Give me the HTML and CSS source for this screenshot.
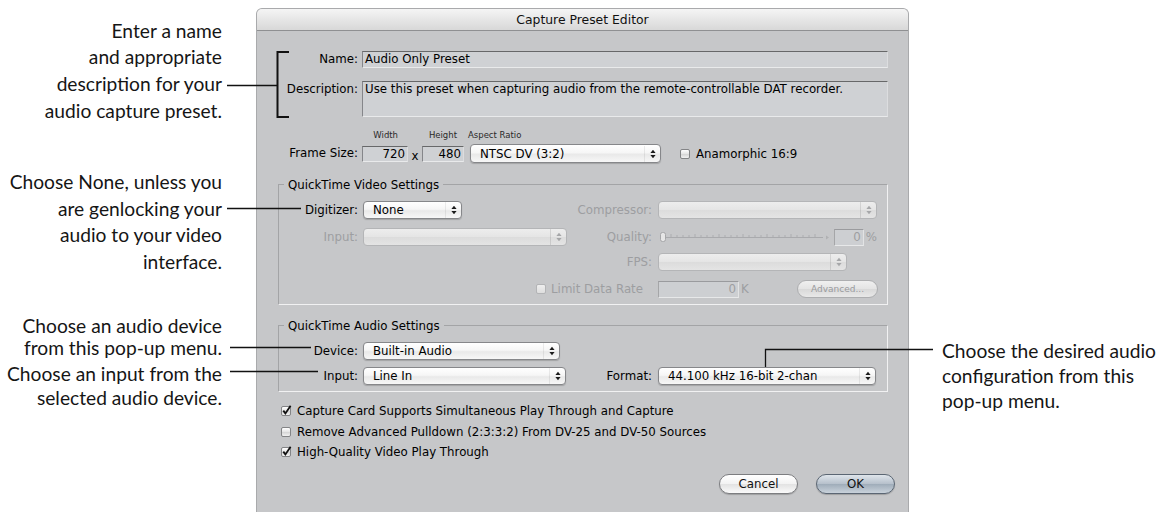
FILE: index.html
```html
<!DOCTYPE html>
<html>
<head>
<meta charset="utf-8">
<title>Capture Preset Editor</title>
<link rel="stylesheet" href="styles.css">
</head>
<body>
<div class="page">
  <div class="notes-left">
    <p class="note n1">Enter a name<br>and appropriate<br>description for your<br>audio capture preset.</p>
    <p class="note n2">Choose None, unless you<br>are genlocking your<br>audio to your video<br>interface.</p>
    <p class="note n3">Choose an audio device<br>from this pop-up menu.</p>
    <p class="note n4">Choose an input from the<br>selected audio device.</p>
  </div>

  <div class="dialog">
    <div class="titlebar">Capture Preset Editor</div>
    <div class="content">
      <div class="row row-name">
        <span class="lbl">Name:</span>
        <div class="tf tf-wide">Audio Only Preset</div>
      </div>
      <div class="row row-desc">
        <span class="lbl">Description:</span>
        <div class="tf tf-wide tf-area">Use this preset when capturing audio from the remote-controllable DAT recorder.</div>
      </div>
      <div class="caps">
        <span class="cap cap-w">Width</span><span class="cap cap-h">Height</span><span class="cap cap-a">Aspect Ratio</span>
      </div>
      <div class="row row-frame">
        <span class="lbl">Frame Size:</span>
        <div class="tf tf-num tf-w">720</div>
        <span class="times">x</span>
        <div class="tf tf-num tf-h">480</div>
        <div class="popup pop-aspect"><span class="popup-text">NTSC DV (3:2)</span><span class="popup-arrows"><svg class="arr" width="6" height="10" viewBox="0 0 6 10"><path d="M3 0.8 L5.6 4 H0.4Z M3 9.2 L5.6 6 H0.4Z"/></svg></span></div>
        <span class="cb cb-ana"></span>
        <span class="check-label">Anamorphic 16:9</span>
      </div>

      <div class="group group-video">
        <div class="group-title">QuickTime Video Settings</div>
        <div class="grid grid-video">
          <span class="glbl">Digitizer:</span>
          <div class="popup pop-dig"><span class="popup-text">None</span><span class="popup-arrows"><svg class="arr" width="6" height="10" viewBox="0 0 6 10"><path d="M3 0.8 L5.6 4 H0.4Z M3 9.2 L5.6 6 H0.4Z"/></svg></span></div>
          <span class="glbl glbl-r dis">Compressor:</span>
          <div class="popup dis pop-comp"><span class="popup-text"></span><span class="popup-arrows"><svg class="arr" width="6" height="10" viewBox="0 0 6 10"><path d="M3 0.8 L5.6 4 H0.4Z M3 9.2 L5.6 6 H0.4Z"/></svg></span></div>

          <span class="glbl dis col1">Input:</span>
          <div class="popup dis pop-vin"><span class="popup-text"></span><span class="popup-arrows"><svg class="arr" width="6" height="10" viewBox="0 0 6 10"><path d="M3 0.8 L5.6 4 H0.4Z M3 9.2 L5.6 6 H0.4Z"/></svg></span></div>
          <span class="glbl glbl-r dis">Quality:</span>
          <div class="quality">
            <svg class="slider" width="174" height="12" viewBox="0 0 174 12">
              <line x1="6" y1="6.5" x2="164" y2="6.5" class="sl-track"/>
              <path class="sl-ticks" d="M12 3v3 M18 4v2 M24 4v2 M30 4v2 M36 3v3 M42 4v2 M48 4v2 M54 4v2 M60 3v3 M66 4v2 M72 4v2 M78 4v2 M84 3v3 M90 4v2 M96 4v2 M102 4v2 M108 3v3 M114 4v2 M120 4v2 M126 4v2 M132 3v3 M138 4v2 M144 4v2 M150 4v2 M156 3v3"/>
              <rect x="1.5" y="1.5" width="5" height="9" rx="2" class="sl-knob"/>
              <path d="M167 4.5 L170 6.5 L167 8.5Z" class="sl-end"/>
            </svg>
            <div class="tf tf-num tf-q">0</div>
            <span class="unit">%</span>
          </div>

          <span class="glbl glbl-r dis col3">FPS:</span>
          <div class="popup dis pop-fps"><span class="popup-text"></span><span class="popup-arrows"><svg class="arr" width="6" height="10" viewBox="0 0 6 10"><path d="M3 0.8 L5.6 4 H0.4Z M3 9.2 L5.6 6 H0.4Z"/></svg></span></div>

          <div class="limit dis"><span class="cb cb-dis"></span><span class="check-label">Limit Data Rate</span></div>
          <div class="rate">
            <div class="tf tf-num tf-rate">0</div>
            <span class="unit">K</span>
            <div class="btn btn-adv">Advanced...</div>
          </div>
        </div>
      </div>

      <div class="group group-audio">
        <div class="group-title">QuickTime Audio Settings</div>
        <div class="grid grid-audio">
          <span class="glbl">Device:</span>
          <div class="popup pop-dev"><span class="popup-text">Built-in Audio</span><span class="popup-arrows"><svg class="arr" width="6" height="10" viewBox="0 0 6 10"><path d="M3 0.8 L5.6 4 H0.4Z M3 9.2 L5.6 6 H0.4Z"/></svg></span></div>
          <span class="glbl col1">Input:</span>
          <div class="popup pop-ain"><span class="popup-text">Line In</span><span class="popup-arrows"><svg class="arr" width="6" height="10" viewBox="0 0 6 10"><path d="M3 0.8 L5.6 4 H0.4Z M3 9.2 L5.6 6 H0.4Z"/></svg></span></div>
          <span class="glbl glbl-r">Format:</span>
          <div class="popup pop-fmt"><span class="popup-text">44.100 kHz 16-bit 2-chan</span><span class="popup-arrows"><svg class="arr" width="6" height="10" viewBox="0 0 6 10"><path d="M3 0.8 L5.6 4 H0.4Z M3 9.2 L5.6 6 H0.4Z"/></svg></span></div>
        </div>
      </div>

      <div class="checks">
        <div class="crow"><span class="cb cb-on"><svg class="tick" width="12" height="12" viewBox="0 0 12 12"><path d="M2.3 5.6 L4.4 8.4 L9.6 0.8"/></svg></span><span class="check-label">Capture Card Supports Simultaneous Play Through and Capture</span></div>
        <div class="crow"><span class="cb"></span><span class="check-label">Remove Advanced Pulldown (2:3:3:2) From DV-25 and DV-50 Sources</span></div>
        <div class="crow"><span class="cb cb-on"><svg class="tick" width="12" height="12" viewBox="0 0 12 12"><path d="M2.3 5.6 L4.4 8.4 L9.6 0.8"/></svg></span><span class="check-label">High-Quality Video Play Through</span></div>
      </div>

      <div class="buttons">
        <div class="btn">Cancel</div>
        <div class="btn btn-ok">OK</div>
      </div>
    </div>
  </div>

  <div class="notes-right">
    <p class="note n5">Choose the desired audio<br>configuration from this<br>pop-up menu.</p>
  </div>

  <svg class="callouts" width="1162" height="512" viewBox="0 0 1162 512">
    <path class="bracket" d="M289 52 H277.5 V117 H289"/>
    <path class="lead" d="M227 85.5 H277"/>
    <path class="lead" d="M227 208.5 H301"/>
    <path class="lead" d="M230 347.5 H311"/>
    <path class="lead" d="M230 371.5 H318"/>
    <path class="lead" d="M765.5 367 V349.5 H933"/>
  </svg>
</div>
</body>
</html>
```

FILE: styles.css
```css
* { box-sizing: border-box; }
html, body { margin: 0; padding: 0; background: #ffffff; }
body { width: 1162px; height: 512px; overflow: hidden; }

.page { position: relative; display: flex; width: 1162px; height: 512px; }

/* annotations */
.note {
  margin: 0;
  font-family: Lato, "Open Sans", sans-serif;
  font-size: 19.2px;
  color: #151515;
  white-space: nowrap;
}
.notes-left {
  width: 256px; flex: none;
  padding-right: 34px;
  display: flex; flex-direction: column; align-items: flex-end;
  text-align: right;
}
.n1 { margin-top: 17.5px; line-height: 26.7px; }
.n2 { margin-top: 45px; line-height: 26.4px; }
.n3 { margin-top: 40px; line-height: 22.5px; }
.n4 { margin-top: 2.5px; line-height: 23.5px; }
.notes-right { flex: 1; padding-left: 33px; }
.n5 { margin-top: 337.5px; line-height: 25px; }

/* dialog */
.dialog {
  width: 653px; height: 504px; flex: none;
  margin-top: 8px;
  background: #c6c7c9;
  border: 1px solid #a9aaac;
  border-bottom: none;
  border-radius: 6px 6px 0 0;
  overflow: hidden;
  font-family: "DejaVu Sans", "Liberation Sans", sans-serif;
  font-size: 11.8px;
  color: #000;
}
.titlebar {
  height: 22px;
  border-bottom: 1px solid #8f9092;
  background: linear-gradient(#f5f5f5, #e6e6e6 50%, #d8d8d8);
  text-align: center;
  font-size: 12.4px;
  line-height: 21px;
  color: #111;
}
.content { padding-top: 20px; }

.row { display: flex; align-items: flex-start; }
.lbl { width: 101px; flex: none; text-align: right; line-height: 17px; white-space: nowrap; }

.tf {
  background: #cfd1d4;
  border: 1px solid;
  border-color: #676869 #dcdddf #e9eaeb #85868a;
  line-height: 15px;
  padding: 0 2px;
  white-space: nowrap;
  overflow: hidden;
}
.tf-wide { margin-left: 4px; width: 526px; height: 17px; }
.row-desc { margin-top: 13px; }
.tf-area { height: 36px; }

.caps { display: flex; margin-top: 13px; height: 10px; font-size: 8.5px; line-height: 10px; color: #2a2a2a; }
.cap-w { width: 141px; text-align: right; }
.cap-h { width: 59px; text-align: right; }
.cap-a { margin-left: 11px; }

.row-frame { margin-top: 4px; align-items: center; height: 19px; }
.tf-num { text-align: right; height: 16px; }
.tf-w { margin-left: 4px; width: 46px; }
.times { width: 14px; text-align: center; padding-top: 4px; }
.tf-h { width: 42px; }

/* popups */
.popup {
  display: flex; align-items: center;
  height: 18px;
  border: 1px solid #86878a;
  border-radius: 4px;
  background: linear-gradient(#ffffff, #f6f6f6 45%, #e9e9e9 55%, #f7f7f7);
  box-shadow: 0 1px 1px rgba(0,0,0,0.18);
  padding-left: 9px;
}
.popup-text { flex: 1; line-height: 16px; white-space: nowrap; overflow: hidden; }
.popup-arrows {
  width: 16px; height: 16px; flex: none;
  display: flex; align-items: center; justify-content: center;
  border-left: 1px solid rgba(0,0,0,0.07);
}
.arr { fill: #1b1b1b; display: block; }
.popup.dis {
  border-color: #b4b5b7;
  background: linear-gradient(#ededed, #e5e5e5 48%, #dcdcdc 52%, #e4e4e4);
  box-shadow: none;
}
.popup.dis .arr { fill: #a6a7a9; }
.popup.dis .popup-arrows { border-left-color: rgba(0,0,0,0.1); }

.pop-aspect { margin-left: 6px; width: 191px; height: 19px; }
.pop-dig { width: 99px; }
.pop-comp { width: 219px; }
.pop-vin { width: 204px; }
.pop-fps { width: 189px; }
.pop-dev { width: 197px; }
.pop-ain { width: 203px; }
.pop-fmt { width: 218px; }

/* checkboxes */
.cb {
  position: relative;
  display: inline-block; flex: none;
  width: 10px; height: 10px;
  border: 1px solid #838486;
  border-radius: 2px;
  background: linear-gradient(#ffffff, #e4e4e4 50%, #d4d4d4 51%, #f2f2f2);
}
.cb-dis { border-color: #b3b4b6; background: linear-gradient(#eeeeee, #dedede); }
.tick { position: absolute; left: -1px; top: -2px; fill: none; stroke: #111; stroke-width: 1.8; }
.check-label { margin-left: 6px; white-space: nowrap; }
.cb-ana { margin-left: 19px; }

/* groups */
.group {
  margin-left: 21px;
  width: 610px;
  border: 1px solid;
  border-color: #a3a4a6 #f1f1f2 #f1f1f2 #a3a4a6;
  padding-bottom: 5px;
}
.group-video { margin-top: 21px; }
.group-audio { margin-top: 20px; }
.group-title {
  width: fit-content;
  margin: -6px 0 0 5px;
  padding: 0 4px;
  line-height: 13px;
  background: #c6c7c9;
}
.grid {
  display: grid;
  grid-template-columns: 84px 209px 86px 219px;
  align-items: start;
  margin-top: 9px;
}
.grid-video { grid-template-rows: 27px 25px 27px 19px; }
.grid-audio { grid-template-rows: 25px 19px; }
.glbl { text-align: right; padding-right: 5px; line-height: 18px; white-space: nowrap; }
.glbl-r { padding-right: 6px; }
.col1 { grid-column: 1; }
.col3 { grid-column: 3; }
.dis { color: #9d9ea1; }

.quality { display: flex; align-items: center; height: 18px; }
.slider { display: block; flex: none; margin-left: 1px; }
.sl-track { stroke: #a9aaad; stroke-width: 1; }
.sl-ticks { stroke: #acadb0; stroke-width: 1; fill: none; }
.sl-knob { fill: #e6e6e6; stroke: #a5a6a8; stroke-width: 1; }
.sl-end { fill: #b0b1b3; }
.tf-q { width: 32px; height: 17px; margin-left: 1px; color: #9d9ea1; background: #cdcfd2; border-color: #9a9b9e #e2e3e4 #e7e8e9 #a5a6a8; }
.unit { margin-left: 2px; color: #9d9ea1; line-height: 17px; }

.limit { grid-column: 2 / 4; justify-self: end; padding-right: 15px; display: flex; align-items: center; height: 18px; }
.limit .check-label { margin-left: 5px; }
.rate { display: flex; align-items: center; height: 18px; }
.tf-rate { width: 81px; height: 17px; color: #9d9ea1; background: #cdcfd2; border-color: #9a9b9e #e2e3e4 #e7e8e9 #a5a6a8; }

/* buttons */
.btn {
  width: 79px; height: 20px;
  border-radius: 10px;
  border: 1px solid #7c7d80;
  background: linear-gradient(#ffffff, #f3f3f3 48%, #e3e3e3 52%, #fafafa);
  box-shadow: 0 1px 1px rgba(0,0,0,0.2);
  text-align: center;
  line-height: 18px;
  font-size: 11.8px;
  color: #111;
}
.btn-ok {
  border-color: #5b6673;
  background: linear-gradient(#dfe5eb, #b7c1cc 48%, #a0adba 52%, #c9d2db);
}
.btn-adv {
  margin-left: auto; margin-right: -1px;
  width: 81px; height: 18px;
  border-radius: 9px;
  border-color: #adaeb0;
  background: linear-gradient(#f0f0f0, #e4e4e4 50%, #d9d9d9 52%, #e8e8e8);
  box-shadow: none;
  font-size: 9px; line-height: 16px;
  color: #9a9b9e;
}

.checks { margin-top: 9px; margin-left: 24px; }
.crow { display: flex; align-items: center; height: 20.5px; }
.buttons { display: flex; justify-content: flex-end; gap: 18px; padding-right: 13px; margin-top: 11.5px; }

/* callout lines */
.callouts { position: absolute; left: 0; top: 0; pointer-events: none; }
.callouts path { fill: none; stroke: #111; }
.bracket { stroke-width: 2; }
.lead { stroke-width: 1.3; }
```
